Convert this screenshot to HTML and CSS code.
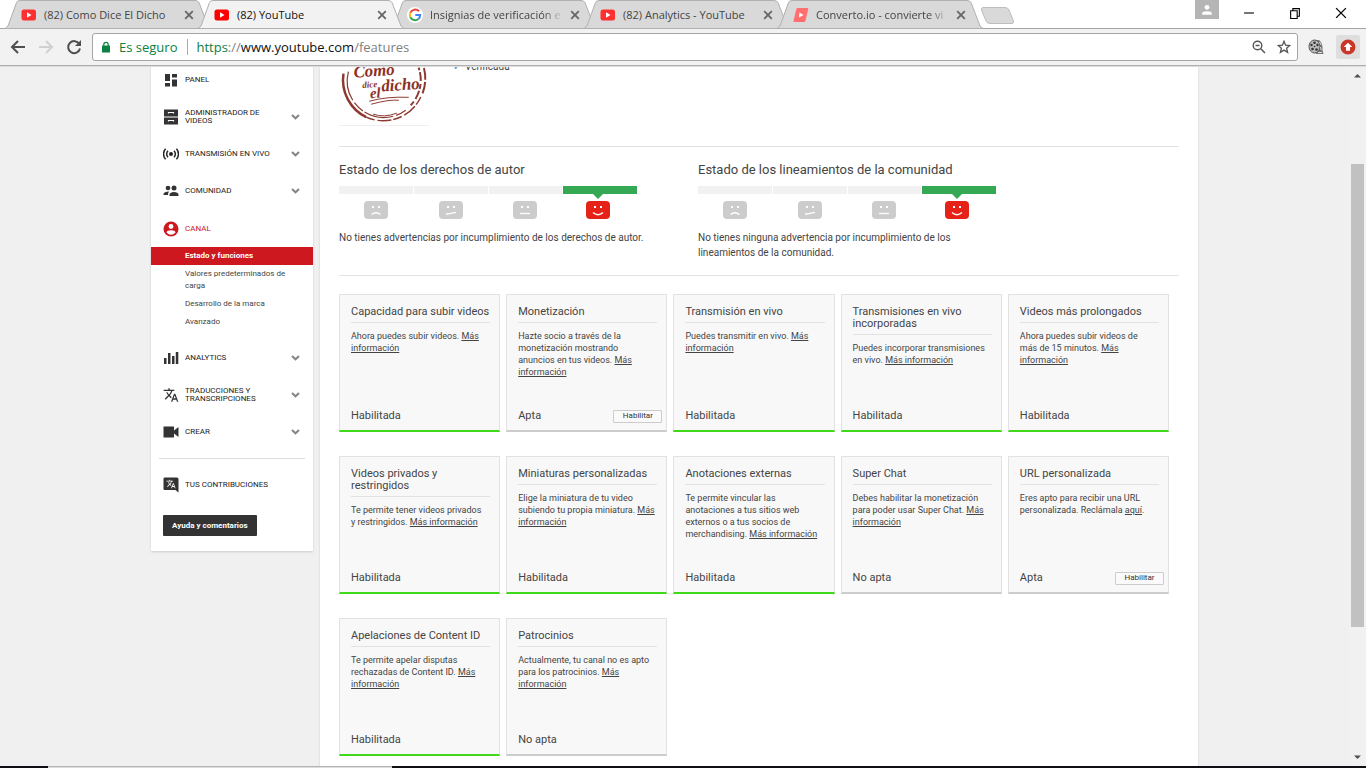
FILE: index.html
```html
<!doctype html>
<html lang="es">
<head>
  <meta charset="utf-8">
  <title>(82) YouTube</title>
  <link rel="stylesheet" href="styles.css">
</head>
<body>
  <!-- shared icons -->
  <svg class="sprite" aria-hidden="true">
    <symbol id="tab-shape" viewBox="0 0 206 29">
      <path d="M0 28.5 L3 26 L11.500 2.500 Q12.500 0.500 15 0.500 H190 Q193 0.500 194 2.500 L203 26 L206 28.500 Z"/>
    </symbol>
    <symbol id="yt" viewBox="0 0 16 12">
      <rect x="0.500" y="0.500" width="14.500" height="11" rx="2.500" fill="currentColor"/>
      <path d="M6 3.300 L10.500 6 L6 8.700 Z" fill="#fff"/>
    </symbol>
    <symbol id="close" viewBox="0 0 10 10">
      <path d="M1.200 1.200 L8.800 8.800 M8.800 1.200 L1.200 8.800" stroke="currentColor" stroke-width="1.800" fill="none"/>
    </symbol>
    <symbol id="chevron" viewBox="0 0 9 6">
      <path d="M1 1 L4.500 4.300 L8 1" stroke="#858585" stroke-width="2" fill="none"/>
    </symbol>
    <symbol id="face-sad" viewBox="0 0 24 18">
      <rect width="24" height="18" rx="4" fill="#ccc"/>
      <path d="M8 5h2v2H8z M14 5h2v2h-2z" fill="#fff"/>
      <path d="M7.500 13.500 Q12 10 16.500 13.500" stroke="#fff" stroke-width="1.300" fill="none"/>
    </symbol>
    <symbol id="face-meh" viewBox="0 0 24 18">
      <rect width="24" height="18" rx="4" fill="#ccc"/>
      <path d="M8 5h2v2H8z M14 5h2v2h-2z" fill="#fff"/>
      <path d="M7 13 Q10 12.800 12 12.300 T17 11.300" stroke="#fff" stroke-width="1.300" fill="none"/>
    </symbol>
    <symbol id="face-flat" viewBox="0 0 24 18">
      <rect width="24" height="18" rx="4" fill="#ccc"/>
      <path d="M8 5h2v2H8z M14 5h2v2h-2z" fill="#fff"/>
      <path d="M7 12.500 H17" stroke="#fff" stroke-width="1.300" fill="none"/>
    </symbol>
    <symbol id="face-happy" viewBox="0 0 24 18">
      <rect width="24" height="18" rx="4" fill="#e62117"/>
      <path d="M8 5h2v2H8z M14 5h2v2h-2z" fill="#fff"/>
      <path d="M7 11.500 Q12 16 17 11.500" stroke="#fff" stroke-width="1.500" fill="none"/>
    </symbol>
    <symbol id="translate" viewBox="0 0 24 24">
      <path d="M12.870 15.070l-2.540-2.510.03-.03c1.740-1.940 2.980-4.170 3.710-6.530H17V4h-7V2H8v2H1v1.990h11.170C11.500 7.920 10.440 9.750 9 11.350 8.070 10.320 7.300 9.190 6.690 8h-2c.73 1.630 1.730 3.170 2.980 4.560l-5.090 5.020L4 19l5-5 3.110 3.110.76-2.040zM18.500 10h-2L12 22h2l1.120-3h4.750L21 22h2l-4.500-12zm-2.620 7l1.620-4.330L19.120 17h-3.240z" fill="currentColor"/>
    </symbol>
  </svg>

  <header class="browser">
    <div class="tabs">
      <div class="tab">
        <svg class="tab-bg"><use href="#tab-shape"/></svg>
        <svg class="favicon soft"><use href="#yt"/></svg>
        <span class="tab-title">(82) Como Dice El Dicho</span>
        <button class="tab-close" aria-label="Cerrar"><svg><use href="#close"/></svg></button>
      </div>
      <div class="tab active">
        <svg class="tab-bg"><use href="#tab-shape"/></svg>
        <svg class="favicon"><use href="#yt"/></svg>
        <span class="tab-title">(82) YouTube</span>
        <button class="tab-close" aria-label="Cerrar"><svg><use href="#close"/></svg></button>
      </div>
      <div class="tab">
        <svg class="tab-bg"><use href="#tab-shape"/></svg>
        <svg class="favicon round" viewBox="0 0 16 16">
          <circle cx="8" cy="8" r="8" fill="#fff"/>
          <path d="M12 4.300 A5.300 5.300 0 0 0 3.300 5.700" stroke="#ea4335" stroke-width="2" fill="none"/>
          <path d="M3.300 5.700 A5.300 5.300 0 0 0 3.300 10.300" stroke="#fbbc05" stroke-width="2" fill="none"/>
          <path d="M3.300 10.300 A5.300 5.300 0 0 0 11.400 12" stroke="#34a853" stroke-width="2" fill="none"/>
          <path d="M11.400 12 A5.300 5.300 0 0 0 13.200 8 H8.300" stroke="#4285f4" stroke-width="2" fill="none"/>
        </svg>
        <span class="tab-title fade">Insignias de verificación e</span>
        <button class="tab-close" aria-label="Cerrar"><svg><use href="#close"/></svg></button>
      </div>
      <div class="tab">
        <svg class="tab-bg"><use href="#tab-shape"/></svg>
        <svg class="favicon soft"><use href="#yt"/></svg>
        <span class="tab-title">(82) Analytics - YouTube</span>
        <button class="tab-close" aria-label="Cerrar"><svg><use href="#close"/></svg></button>
      </div>
      <div class="tab">
        <svg class="tab-bg"><use href="#tab-shape"/></svg>
        <svg class="favicon round" viewBox="0 0 16 16">
          <path d="M4.500 1 H14.500 Q15.500 1 15.200 2.500 L12.500 13.500 Q12.200 15 11 15 H1 Q0.300 15 0.600 13.500 L3.300 2.200 Q3.600 1 4.500 1 Z" fill="#ff6f6f"/>
          <path d="M6.500 5.500 L10.500 8 L6 10.500 Z" fill="#fff"/>
        </svg>
        <span class="tab-title fade">Converto.io - convierte vi</span>
        <button class="tab-close" aria-label="Cerrar"><svg><use href="#close"/></svg></button>
      </div>
      <button class="new-tab" aria-label="Nueva pestaña">
        <svg viewBox="0 0 36 19"><path d="M3 1.500 H25 Q28 1.500 29 4 L33.500 15 Q34 17.500 32 17.500 H10 Q7 17.500 6 15 L1.500 4 Q1 1.500 3 1.500 Z" fill="#d9d9d9" stroke="#bdbdbd"/></svg>
      </button>
      <div class="window-buttons">
        <button class="profile" aria-label="Perfil">
          <svg viewBox="0 0 10 10"><circle cx="5" cy="2.800" r="2" fill="#fff"/><path d="M1 9 V8 Q1 6 5 6 T9 8 V9 Z" fill="#fff"/></svg>
        </button>
        <button aria-label="Minimizar"><svg viewBox="0 0 11 11"><path d="M1 5.500 H10" stroke="#000" fill="none"/></svg></button>
        <button aria-label="Restaurar"><svg viewBox="0 0 11 11"><path d="M1.500 3.500 H7.500 V10.500 H1.500 Z M3.500 3 V1.500 H9.500 V8.500 H8" stroke="#000" fill="none"/></svg></button>
        <button aria-label="Cerrar ventana"><svg viewBox="0 0 11 11"><path d="M1 1 L10 10 M10 1 L1 10" stroke="#000" stroke-width="1.200" fill="none"/></svg></button>
      </div>
    </div>

    <div class="toolbar">
      <button class="nav-btn" aria-label="Atrás"><svg viewBox="0 0 16 16"><path d="M15 8 H2.500 M8 2 L2 8 L8 14" stroke="#4f4f4f" stroke-width="2" fill="none"/></svg></button>
      <button class="nav-btn" aria-label="Adelante"><svg viewBox="0 0 16 16"><path d="M1 8 H13.500 M8 2 L14 8 L8 14" stroke="#d0d0d0" stroke-width="2" fill="none"/></svg></button>
      <button class="nav-btn" aria-label="Volver a cargar"><svg viewBox="0 0 16 16"><path d="M13.300 5 A6 6 0 1 0 14 9.500" stroke="#4f4f4f" stroke-width="2" fill="none"/><path d="M15 1 V7 H9 Z" fill="#4f4f4f"/></svg></button>
      <div class="omnibox">
        <svg class="lock" viewBox="0 0 8 11"><path d="M0 4 H8 V11 H0 Z" fill="#0b8043"/><path d="M1.800 4.500 V3 A2.200 2.200 0 0 1 6.200 3 V4.500" stroke="#0b8043" stroke-width="1.200" fill="none"/></svg>
        <span class="secure">Es seguro</span>
        <div class="url"><span class="scheme">https</span>://<span class="host">www.youtube.com</span>/features</div>
        <svg class="omni-icon" viewBox="0 0 14 14"><circle cx="5.500" cy="5.500" r="4.300" stroke="#555" stroke-width="1.400" fill="none"/><path d="M3.500 5.500 H7.500 M8.800 8.800 L13 13" stroke="#555" stroke-width="1.500"/></svg>
        <svg class="omni-icon" viewBox="0 0 14 14"><path d="M7 1.300 L8.600 5.200 L12.800 5.500 L9.600 8.200 L10.600 12.300 L7 10.100 L3.400 12.300 L4.400 8.200 L1.200 5.500 L5.400 5.200 Z" stroke="#555" stroke-width="1.300" fill="none"/></svg>
      </div>
      <button class="ext" aria-label="Descargar video">
        <svg viewBox="0 0 16 16">
          <path d="M6 1 H11 Q15 4 14.500 11 L15.500 15 H8 Z" fill="#777"/>
          <ellipse cx="6.500" cy="7.500" rx="5.500" ry="6.500" fill="#bbb" stroke="#555"/>
          <g fill="#333"><circle cx="6.500" cy="3.700" r="1.300"/><circle cx="3.500" cy="6" r="1.200"/><circle cx="9.500" cy="6" r="1.200"/><circle cx="4.500" cy="10" r="1.300"/><circle cx="8.500" cy="10.500" r="1.300"/><circle cx="6.500" cy="7.500" r="0.800"/></g>
          <path d="M11.500 3 L13 6 M12.500 8 L13.200 11 M10 13.500 H14" stroke="#ddd"/>
        </svg>
      </button>
      <button class="ext pressed" aria-label="Actualizar">
        <svg viewBox="0 0 16 16"><circle cx="8" cy="8" r="7.500" fill="#c8372a"/><path d="M8 3.700 L12.300 8 H10 V11.700 H6 V8 H3.700 Z" fill="#fff"/></svg>
      </button>
    </div>
  </header>

  <div class="viewport">
    <div class="page">
      <div class="container">
        <nav class="sidebar">
          <ul class="menu">
            <li><a href="#">
              <svg class="ico" viewBox="0 0 16 16"><path d="M2 2 H7 V9 H2 Z M2 11 H7 V14.500 H2 Z M9 2 H14 V5.500 H9 Z M9 7.500 H14 V14.500 H9 Z" fill="#333"/></svg>
              <span>Panel</span></a></li>
            <li><a href="#">
              <svg class="ico" viewBox="0 0 16 16"><path d="M1 0.500 H15 V7.500 H1 Z M1 8.500 H15 V15.500 H1 Z" fill="#333"/><path d="M5.500 4.500 V3.500 H10.500 V4.500 M5.500 12.500 V11.500 H10.500 V12.500" stroke="#fff" stroke-width="1.200" fill="none"/></svg>
              <span>Administrador de videos</span><svg class="chev"><use href="#chevron"/></svg></a></li>
            <li><a href="#">
              <svg class="ico" viewBox="0 0 16 16"><circle cx="8" cy="8" r="2" fill="#222"/><path d="M5 4.800 A4.500 4.500 0 0 0 5 11.200 M11 4.800 A4.500 4.500 0 0 1 11 11.200 M2.600 2.800 A7.500 7.500 0 0 0 2.600 13.200 M13.400 2.800 A7.500 7.500 0 0 1 13.400 13.200" stroke="#222" stroke-width="1.500" fill="none"/></svg>
              <span>Transmisión en vivo</span><svg class="chev"><use href="#chevron"/></svg></a></li>
            <li><a href="#">
              <svg class="ico" viewBox="0 0 16 16"><circle cx="5" cy="5" r="2.300" fill="#333"/><circle cx="11" cy="5" r="2.500" fill="#333"/><path d="M0.500 12 V11 Q1 8.700 6 8.500 Q5 9.500 5 12 Z M6.500 13 V11.500 Q7 9 11 9 T15.500 11.500 V13 Z" fill="#333"/></svg>
              <span>Comunidad</span><svg class="chev"><use href="#chevron"/></svg></a></li>
            <li><a href="#" class="current">
              <svg class="ico" viewBox="0 0 16 16"><circle cx="8" cy="8" r="7.500" fill="#cc181e"/><circle cx="8" cy="5.500" r="2.400" fill="#fff"/><path d="M3.500 11.500 Q4 9.300 8 9.300 T12.500 11.500 Q10.500 13.800 8 13.800 T3.500 11.500 Z" fill="#fff"/></svg>
              <span>Canal</span></a>
              <ul class="submenu">
                <li><a href="#" class="selected">Estado y funciones</a></li>
                <li><a href="#">Valores predeterminados de carga</a></li>
                <li><a href="#">Desarrollo de la marca</a></li>
                <li><a href="#">Avanzado</a></li>
              </ul>
            </li>
            <li><a href="#">
              <svg class="ico" viewBox="0 0 16 16"><path d="M1 8 H3.500 V14 H1 Z M5 3 H7.500 V14 H5 Z M9 6 H11.500 V14 H9 Z M12.800 2 H15.300 V14 H12.800 Z" fill="#333"/></svg>
              <span>Analytics</span><svg class="chev"><use href="#chevron"/></svg></a></li>
            <li><a href="#">
              <svg class="ico"><use href="#translate"/></svg>
              <span>Traducciones y transcripciones</span><svg class="chev"><use href="#chevron"/></svg></a></li>
            <li><a href="#">
              <svg class="ico" viewBox="0 0 16 16"><path d="M0.500 2.500 H11 V6.500 L15.500 3 V13 L11 9.500 V13.500 H0.500 Z" fill="#333"/></svg>
              <span>Crear</span><svg class="chev"><use href="#chevron"/></svg></a></li>
          </ul>
          <ul class="menu contributions">
            <li><a href="#">
              <svg class="ico" viewBox="0 0 16 16"><path d="M1.500 0.500 H14 Q15.500 0.500 15.500 2 V15.500 L12.500 13 H1.500 Q0.500 13 0.500 12 V2 Q0.500 0.500 1.500 0.500 Z" fill="#333"/><g color="#fff"><use href="#translate" x="3" y="2" width="10" height="10"/></g></svg>
              <span>Tus contribuciones</span></a></li>
          </ul>
          <button class="help">Ayuda y comentarios</button>
        </nav>

        <main class="content">
          <section class="channel">
            <svg class="avatar" viewBox="0 -2 90 90" role="img" aria-label="Como dice el dicho">
              <g fill="none" stroke="#8c3a30">
                <path d="M4 36 A42 42 0 0 0 27 80" stroke-width="2.500"/>
                <path d="M27 80 A42 42 0 0 0 83 58" stroke-width="1.500" stroke-dasharray="9 3 14 2"/>
                <path d="M84 56 A42 42 0 0 0 85 29" stroke-width="2" stroke-dasharray="12 2"/>
                <path d="M9 34 A37 37 0 0 0 67 73" stroke-width="1.200" stroke-dasharray="30 3 12 2"/>
                <path d="M72 68 A37 37 0 0 0 80 30" stroke-width="2" stroke-dasharray="5 3 9 2"/>
                <path d="M34 77 Q45 81 58 76"/>
                <path d="M30 64 Q48 59 70 60 M32 67 Q50 62 60 63"/>
              </g>
              <g class="logo-text" transform="rotate(-4 45 45)">
                <text x="15" y="38" font-size="17">Como</text>
                <text x="23" y="49" font-size="9">dice</text>
                <text x="30" y="60" font-size="15">el</text>
                <text x="42" y="54" font-size="17">dicho</text>
              </g>
            </svg>
            <ul class="channel-info"><li>Verificada</li></ul>
          </section>

          <section class="standing">
            <div class="standing-col">
              <h2>Estado de los derechos de autor</h2>
              <div class="meter">
                <div class="step"><svg><use href="#face-sad"/></svg></div>
                <div class="step"><svg><use href="#face-meh"/></svg></div>
                <div class="step"><svg><use href="#face-flat"/></svg></div>
                <div class="step good"><svg><use href="#face-happy"/></svg></div>
              </div>
              <p>No tienes advertencias por incumplimiento de los derechos de autor.</p>
            </div>
            <div class="standing-col">
              <h2>Estado de los lineamientos de la comunidad</h2>
              <div class="meter">
                <div class="step"><svg><use href="#face-sad"/></svg></div>
                <div class="step"><svg><use href="#face-meh"/></svg></div>
                <div class="step"><svg><use href="#face-flat"/></svg></div>
                <div class="step good"><svg><use href="#face-happy"/></svg></div>
              </div>
              <p>No tienes ninguna advertencia por incumplimiento de los lineamientos de la comunidad.</p>
            </div>
          </section>

          <section class="features">
            <article class="card enabled">
              <h3>Capacidad para subir videos</h3>
              <p>Ahora puedes subir videos. <a href="#">Más información</a></p>
              <footer>Habilitada</footer>
            </article>
            <article class="card">
              <h3>Monetización</h3>
              <p>Hazte socio a través de la monetización mostrando anuncios en tus videos. <a href="#">Más información</a></p>
              <footer>Apta <button>Habilitar</button></footer>
            </article>
            <article class="card enabled">
              <h3>Transmisión en vivo</h3>
              <p>Puedes transmitir en vivo. <a href="#">Más información</a></p>
              <footer>Habilitada</footer>
            </article>
            <article class="card enabled">
              <h3>Transmisiones en vivo incorporadas</h3>
              <p>Puedes incorporar transmisiones en vivo. <a href="#">Más información</a></p>
              <footer>Habilitada</footer>
            </article>
            <article class="card enabled">
              <h3>Videos más prolongados</h3>
              <p>Ahora puedes subir videos de más de 15 minutos. <a href="#">Más información</a></p>
              <footer>Habilitada</footer>
            </article>
            <article class="card enabled">
              <h3>Videos privados y restringidos</h3>
              <p>Te permite tener videos privados y&nbsp;restringidos. <a href="#">Más información</a></p>
              <footer>Habilitada</footer>
            </article>
            <article class="card enabled">
              <h3>Miniaturas personalizadas</h3>
              <p>Elige la miniatura de tu video subiendo tu propia miniatura. <a href="#">Más información</a></p>
              <footer>Habilitada</footer>
            </article>
            <article class="card enabled">
              <h3>Anotaciones externas</h3>
              <p>Te permite vincular las anotaciones a tus sitios web externos o a tus socios de merchandising. <a href="#">Más información</a></p>
              <footer>Habilitada</footer>
            </article>
            <article class="card">
              <h3>Super Chat</h3>
              <p>Debes habilitar la monetización para poder usar Super Chat. <a href="#">Más información</a></p>
              <footer>No apta</footer>
            </article>
            <article class="card">
              <h3>URL personalizada</h3>
              <p>Eres apto para recibir una URL personalizada. Reclámala <a href="#">aquí</a>.</p>
              <footer>Apta <button>Habilitar</button></footer>
            </article>
            <article class="card enabled">
              <h3>Apelaciones de Content ID</h3>
              <p>Te permite apelar disputas rechazadas de Content ID. <a href="#">Más información</a></p>
              <footer>Habilitada</footer>
            </article>
            <article class="card">
              <h3>Patrocinios</h3>
              <p>Actualmente, tu canal no es apto para los patrocinios. <a href="#">Más información</a></p>
              <footer>No apta</footer>
            </article>
          </section>
        </main>
      </div>
    </div>

    <div class="scrollbar">
      <svg viewBox="0 0 17 17"><path d="M5 10.500 L8.500 7 L12 10.500 Z" fill="#505050"/></svg>
      <div class="space-above"></div>
      <div class="thumb"></div>
      <div class="space-below"></div>
      <svg viewBox="0 0 17 17"><path d="M5 6.500 L8.500 10 L12 6.500 Z" fill="#505050"/></svg>
    </div>
  </div>

  <div class="taskbar"><div class="search"></div></div>
</body>
</html>
```
FILE: styles.css
```css
:root {
  --line: #e2e2e2;
  --text: #444;
  --red: #cc181e;
  --green: #3fd91a;
}
* {
  box-sizing: border-box;
}
body {
  margin: 0;
  height: 100vh;
  display: flex;
  flex-direction: column;
  overflow: hidden;
  background: #f0f0f0;
  font-family: Roboto, sans-serif;
  color: var(--text);
}
button {
  padding: 0;
  border: none;
  background: transparent;
  font-family: inherit;
}
svg {
  display: block;
}
ul {
  list-style: none;
  margin: 0;
  padding: 0;
}
h2, h3, p {
  margin: 0;
}
.sprite {
  position: absolute;
  width: 0;
  height: 0;
}

/* browser window */
.browser {
  font-family: "Open Sans", sans-serif;
  flex: none;
}
.tabs {
  display: flex;
  height: 28px;
  padding: 0 2px 0 5px;
  background: #fff;
}
.tab {
  position: relative;
  display: flex;
  align-items: center;
  width: 206px;
  height: 29px;
  margin-right: -13px;
  padding: 0 17px 0 16px;
  flex: none;
}
.tab.active {
  z-index: 2;
}
.tab-bg {
  position: absolute;
  left: 0;
  top: 0;
  width: 206px;
  height: 29px;
  fill: #d9d9d9;
  stroke: #b0b0b0;
}
.active .tab-bg {
  fill: #f2f2f2;
}
.favicon {
  position: relative;
  width: 16px;
  height: 12px;
  margin-right: 7px;
  color: #f00;
  flex: none;
}
.favicon.soft {
  color: #ff3030;
}
.favicon.round {
  height: 16px;
}
.tab-title {
  position: relative;
  flex: 1;
  margin-right: 7px;
  white-space: nowrap;
  font-size: 11px;
  line-height: 16px;
  color: #444;
}
.tab-title.fade {
  -webkit-mask-image: linear-gradient(to right, #000 85%, transparent);
  mask-image: linear-gradient(to right, #000 85%, transparent);
}
.active .tab-title {
  color: #111;
}
.tab-close {
  position: relative;
  color: #666;
}
.tab-close svg {
  width: 10px;
  height: 10px;
}
.new-tab {
  margin: 6px 0 0 10px;
  align-self: flex-start;
}
.new-tab svg {
  width: 36px;
  height: 19px;
}
.window-buttons {
  display: flex;
  margin-left: auto;
}
.window-buttons button {
  width: 46px;
  height: 26px;
  display: flex;
  align-items: center;
  justify-content: center;
}
.window-buttons svg {
  width: 12px;
  height: 12px;
}
.window-buttons .profile {
  width: 24px;
  height: 19px;
  margin-right: 7px;
  background: #b5b5b5;
}
.toolbar {
  display: flex;
  align-items: center;
  height: 39px;
  padding: 0 6px 2px 10px;
  background: #f2f2f2;
  border-top: 1px solid #a5a5a5;
  border-bottom: 1px solid #dcdcdc;
  box-shadow: inset 0 -1px #b0b0b0;
}
.nav-btn {
  width: 16px;
  margin-right: 12px;
}
.nav-btn svg {
  width: 16px;
  height: 16px;
}
.omnibox {
  flex: 1;
  display: flex;
  align-items: center;
  height: 28px;
  margin: 0 8px 0 -2px;
  padding: 0 6px 0 9px;
  background: #fff;
  border: 1px solid #a5a5a5;
  border-radius: 3px;
  font-size: 13px;
}
.lock {
  width: 8px;
  height: 12px;
  margin-right: 9px;
}
.secure {
  padding-right: 10px;
  line-height: 16px;
  color: #0b8043;
  border-right: 1px solid #aaa;
}
.url {
  flex: 1;
  padding-left: 8px;
  color: #808080;
}
.scheme {
  color: #0b8043;
}
.host {
  color: #111;
}
.omni-icon {
  width: 14px;
  height: 14px;
  margin-left: 11px;
}
.ext {
  width: 24px;
  height: 24px;
  padding: 4px;
  margin-left: 8px;
  border-radius: 2px;
}
.omnibox + .ext {
  margin-left: -2px;
}
.ext.pressed {
  background: #dedede;
}
.ext svg {
  width: 16px;
  height: 16px;
}

/* page */
.viewport {
  flex: 1;
  min-height: 0;
  display: flex;
}
.page {
  flex: 1;
  overflow: hidden;
}
.container {
  display: flex;
  align-items: flex-start;
  gap: 7px;
  max-width: 1047px;
  min-height: 100%;
  margin: 0 auto;
}
.sidebar {
  width: 162px;
  flex: none;
  margin-top: -6px;
  padding-bottom: 15px;
  background: #fff;
  box-shadow: 0 1px 2px rgba(0, 0, 0, 0.15);
}
.menu > li > a {
  display: flex;
  align-items: center;
  height: 37px;
  padding: 0 13px 0 12px;
  font-size: 8px;
  line-height: 8px;
  text-transform: uppercase;
  text-decoration: none;
  color: #222;
}
.menu > li > a.current {
  height: 38px;
  padding-top: 2px;
  color: var(--red);
}
.menu > li > a span {
  flex: 1;
  padding-right: 16px;
}
.menu > li > a span:last-child {
  padding-right: 0;
}
.ico {
  width: 16px;
  height: 16px;
  margin-right: 6px;
  flex: none;
  color: #333;
}
.chev {
  width: 9px;
  height: 6px;
}
.submenu {
  margin-bottom: 8px;
}
.submenu a {
  display: block;
  padding: 3px 20px 3px 34px;
  font-size: 8px;
  line-height: 12px;
  text-decoration: none;
  color: var(--text);
}
.submenu .selected {
  background: var(--red);
  color: #fff;
  font-weight: bold;
}
.contributions {
  margin: 8px 8px 0;
  padding-top: 7px;
  border-top: 1px solid #ddd;
}
.contributions > li > a {
  padding: 0 0 0 4px;
}
.help {
  display: block;
  margin: 12px 0 0 12px;
  padding: 0 9px;
  height: 21px;
  border-radius: 1px;
  background: #333;
  color: #fff;
  font-size: 8px;
  font-weight: bold;
}
.content {
  flex: 1;
  min-height: 702px;
  padding: 0 19px;
  background: #fff;
  box-shadow: 0 1px 2px rgba(0, 0, 0, 0.15);
}
.channel {
  display: flex;
  align-items: flex-start;
  height: 80px;
  overflow: hidden;
  border-bottom: 1px solid var(--line);
}
.avatar {
  width: 90px;
  height: 90px;
  margin-top: -31px;
  border-bottom: 1px solid #eee;
}
.logo-text {
  fill: #8c2f25;
  font-family: "Liberation Serif", serif;
  font-style: italic;
  font-weight: bold;
}
.channel-info {
  margin: -6px 0 0 24px;
  font-size: 10px;
  line-height: 12px;
}
.channel-info li::before {
  content: "✓";
  display: inline-block;
  width: 12px;
  color: #4a90d9;
}
.standing {
  display: flex;
  min-height: 129px;
  padding-top: 15px;
  border-bottom: 1px solid var(--line);
}
.standing-col {
  width: 312px;
  margin-right: 47px;
}
.standing h2 {
  font-size: 13px;
  line-height: 16px;
  font-weight: normal;
  white-space: nowrap;
}
.standing p {
  margin-top: 10px;
  font-size: 10px;
  line-height: 15px;
}
.meter {
  display: flex;
  gap: 1px;
  max-width: 298px;
  margin-top: 8px;
}
.step {
  position: relative;
  flex: 1;
  border-top: 8px solid #f1f1f1;
}
.step svg {
  width: 24px;
  height: 18px;
  margin: 7px auto 1px;
}
.step.good {
  border-top-color: #34a853;
}
.step.good::before {
  content: "";
  position: absolute;
  top: 0;
  left: 50%;
  margin-left: -7px;
  border: 5px solid transparent;
  border-top-color: #34a853;
  border-bottom: none;
}
.step.good svg {
  margin-left: 23px;
}
.features {
  display: grid;
  grid-template-columns: repeat(5, 1fr);
  gap: 24px 6px;
  max-width: 830px;
  margin-top: 18px;
}
.card {
  display: flex;
  flex-direction: column;
  min-height: 138px;
  padding-top: 11px;
  background: #f8f8f8;
  border: 1px solid var(--line);
  border-bottom: 2px solid #ccc;
}
.card.enabled {
  border-bottom-color: var(--green);
}
.card h3 {
  margin: 0 9px 0 11px;
  padding-bottom: 4px;
  border-bottom: 1px solid var(--line);
  font-size: 11px;
  line-height: 12px;
  font-weight: normal;
}
.card p {
  margin: 7px 11px 0;
  font-size: 9px;
  line-height: 12px;
}
.card a {
  color: inherit;
}
.card footer {
  display: flex;
  align-items: center;
  justify-content: space-between;
  margin-top: auto;
  padding: 0 4px 7px 11px;
  font-size: 11px;
  line-height: 14px;
}
.card button {
  width: 49px;
  height: 13px;
  border: 1px solid #ccc;
  border-radius: 1px;
  background: #fafafa;
  color: #333;
  font-size: 8px;
  line-height: 10px;
}

/* scrollbar */
.scrollbar {
  display: flex;
  flex-direction: column;
  width: 17px;
  background: #f1f1f1;
}
.scrollbar svg {
  width: 17px;
  height: 17px;
  flex: none;
}
.space-above {
  flex: 80;
}
.thumb {
  flex: 463;
  margin: 0 2px;
  background: #c1c1c1;
}
.space-below {
  flex: 122;
}

.taskbar {
  height: 2px;
  flex: none;
  background: #101014;
}
.search {
  width: 344px;
  height: 2px;
  margin-left: 48px;
  background: #dcdcdc;
  border-top: 1px solid #b5b5b5;
}
```
